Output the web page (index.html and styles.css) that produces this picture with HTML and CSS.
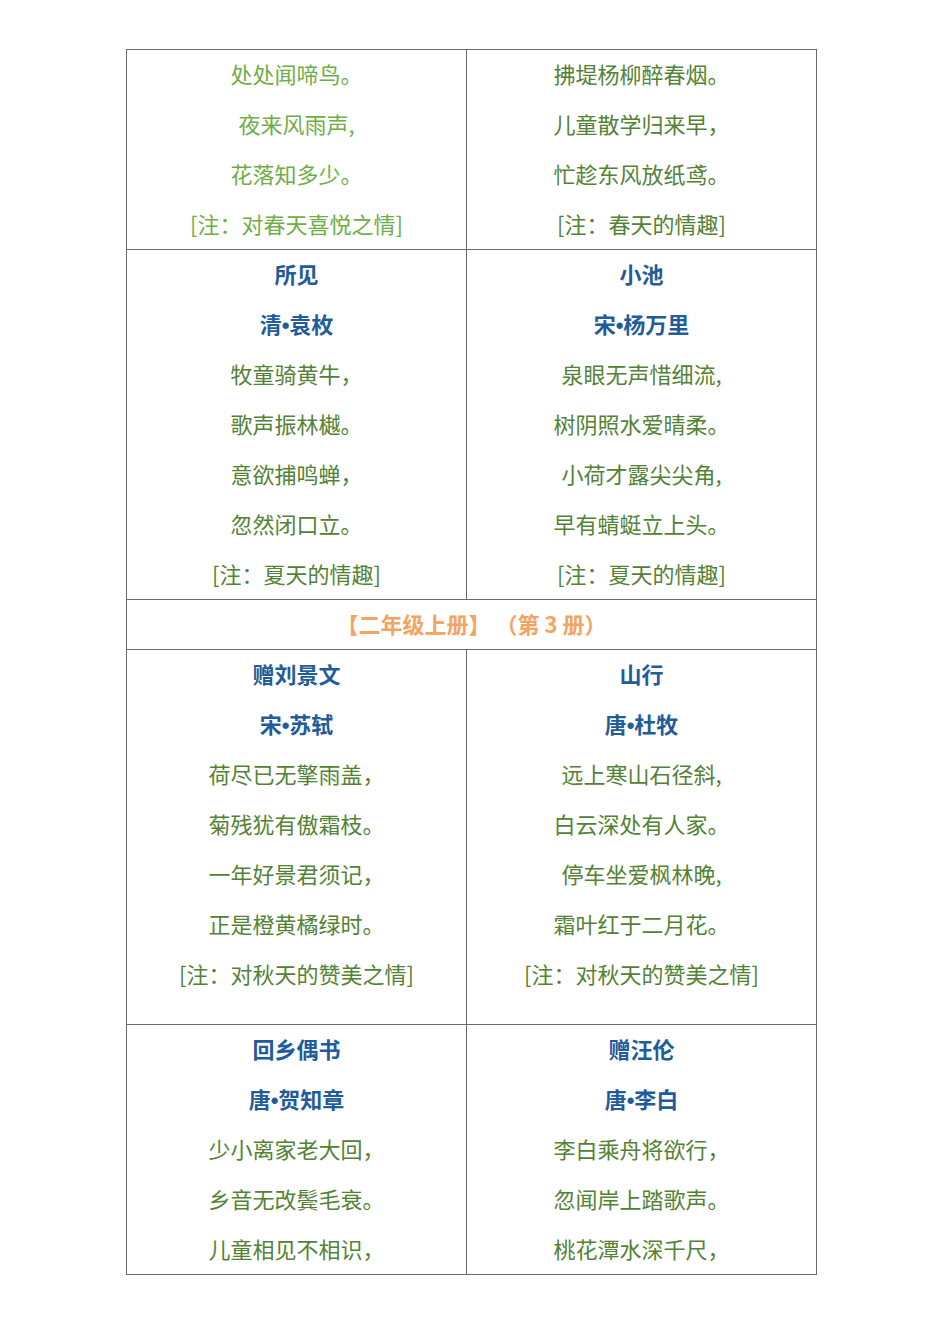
FILE: index.html
```html
<!DOCTYPE html>
<html lang="zh-CN">
<head>
<meta charset="utf-8">
<title>古诗</title>
<link rel="stylesheet" href="styles.css">
</head>
<body>
<div class="page">
  <div class="grid">
    <div class="cell light">
      <p>处处闻啼鸟。</p>
      <p>夜来风雨声,</p>
      <p>花落知多少。</p>
      <p>[注：对春天喜悦之情]</p>
    </div>
    <div class="cell">
      <p>拂堤杨柳醉春烟。</p>
      <p>儿童散学归来早，</p>
      <p>忙趁东风放纸鸢。</p>
      <p>[注：春天的情趣]</p>
    </div>

    <div class="cell">
      <p class="title">所见</p>
      <p class="title">清<span class="dot">•</span>袁枚</p>
      <p>牧童骑黄牛，</p>
      <p>歌声振林樾。</p>
      <p>意欲捕鸣蝉，</p>
      <p>忽然闭口立。</p>
      <p>[注：夏天的情趣]</p>
    </div>
    <div class="cell">
      <p class="title">小池</p>
      <p class="title">宋<span class="dot">•</span>杨万里</p>
      <p>泉眼无声惜细流,</p>
      <p>树阴照水爱晴柔。</p>
      <p>小荷才露尖尖角,</p>
      <p>早有蜻蜓立上头。</p>
      <p>[注：夏天的情趣]</p>
    </div>

    <div class="cell span">
      <p class="grade">【二年级上册】 （第 3 册）</p>
    </div>

    <div class="cell">
      <p class="title">赠刘景文</p>
      <p class="title">宋<span class="dot">•</span>苏轼</p>
      <p>荷尽已无擎雨盖，</p>
      <p>菊残犹有傲霜枝。</p>
      <p>一年好景君须记，</p>
      <p>正是橙黄橘绿时。</p>
      <p>[注：对秋天的赞美之情]</p>
    </div>
    <div class="cell">
      <p class="title">山行</p>
      <p class="title">唐<span class="dot">•</span>杜牧</p>
      <p>远上寒山石径斜,</p>
      <p>白云深处有人家。</p>
      <p>停车坐爱枫林晚,</p>
      <p>霜叶红于二月花。</p>
      <p>[注：对秋天的赞美之情]</p>
    </div>

    <div class="cell">
      <p class="title">回乡偶书</p>
      <p class="title">唐<span class="dot">•</span>贺知章</p>
      <p>少小离家老大回，</p>
      <p>乡音无改鬓毛衰。</p>
      <p>儿童相见不相识，</p>
    </div>
    <div class="cell">
      <p class="title">赠汪伦</p>
      <p class="title">唐<span class="dot">•</span>李白</p>
      <p>李白乘舟将欲行，</p>
      <p>忽闻岸上踏歌声。</p>
      <p>桃花潭水深千尺，</p>
    </div>
  </div>
</div>
</body>
</html>
```

FILE: styles.css
```css
html, body {
  margin: 0;
  padding: 0;
  background: #ffffff;
}

body {
  font-family: "Noto Sans CJK SC", "Noto Sans", sans-serif;
  width: 950px;
  height: 1344px;
  overflow: hidden;
}

.page {
  padding: 49px 0 0 126px;
}

.grid {
  display: grid;
  grid-template-columns: 339px 349px;
  grid-template-rows: 199px 349px 49px 374px 249px;
  gap: 1px;
  padding: 1px;
  width: 689px;
  background: #6b6b6b;
}

.cell {
  background: #ffffff;
  text-align: center;
  color: #548235;
  font-size: 22px;
  overflow: hidden;
}

.cell.light {
  color: #70ad47;
}

.cell.span {
  grid-column: 1 / 3;
}

.cell p {
  margin: 0;
  line-height: 46px;
  height: 50px;
  white-space: nowrap;
}

.cell .title {
  color: #1f5c99;
  font-weight: 700;
}

.cell .dot {
  font-family: "Liberation Sans", sans-serif;
  font-weight: 700;
}

.cell .grade {
  color: #f4a460;
  font-weight: 700;
  white-space: pre;
}
```
